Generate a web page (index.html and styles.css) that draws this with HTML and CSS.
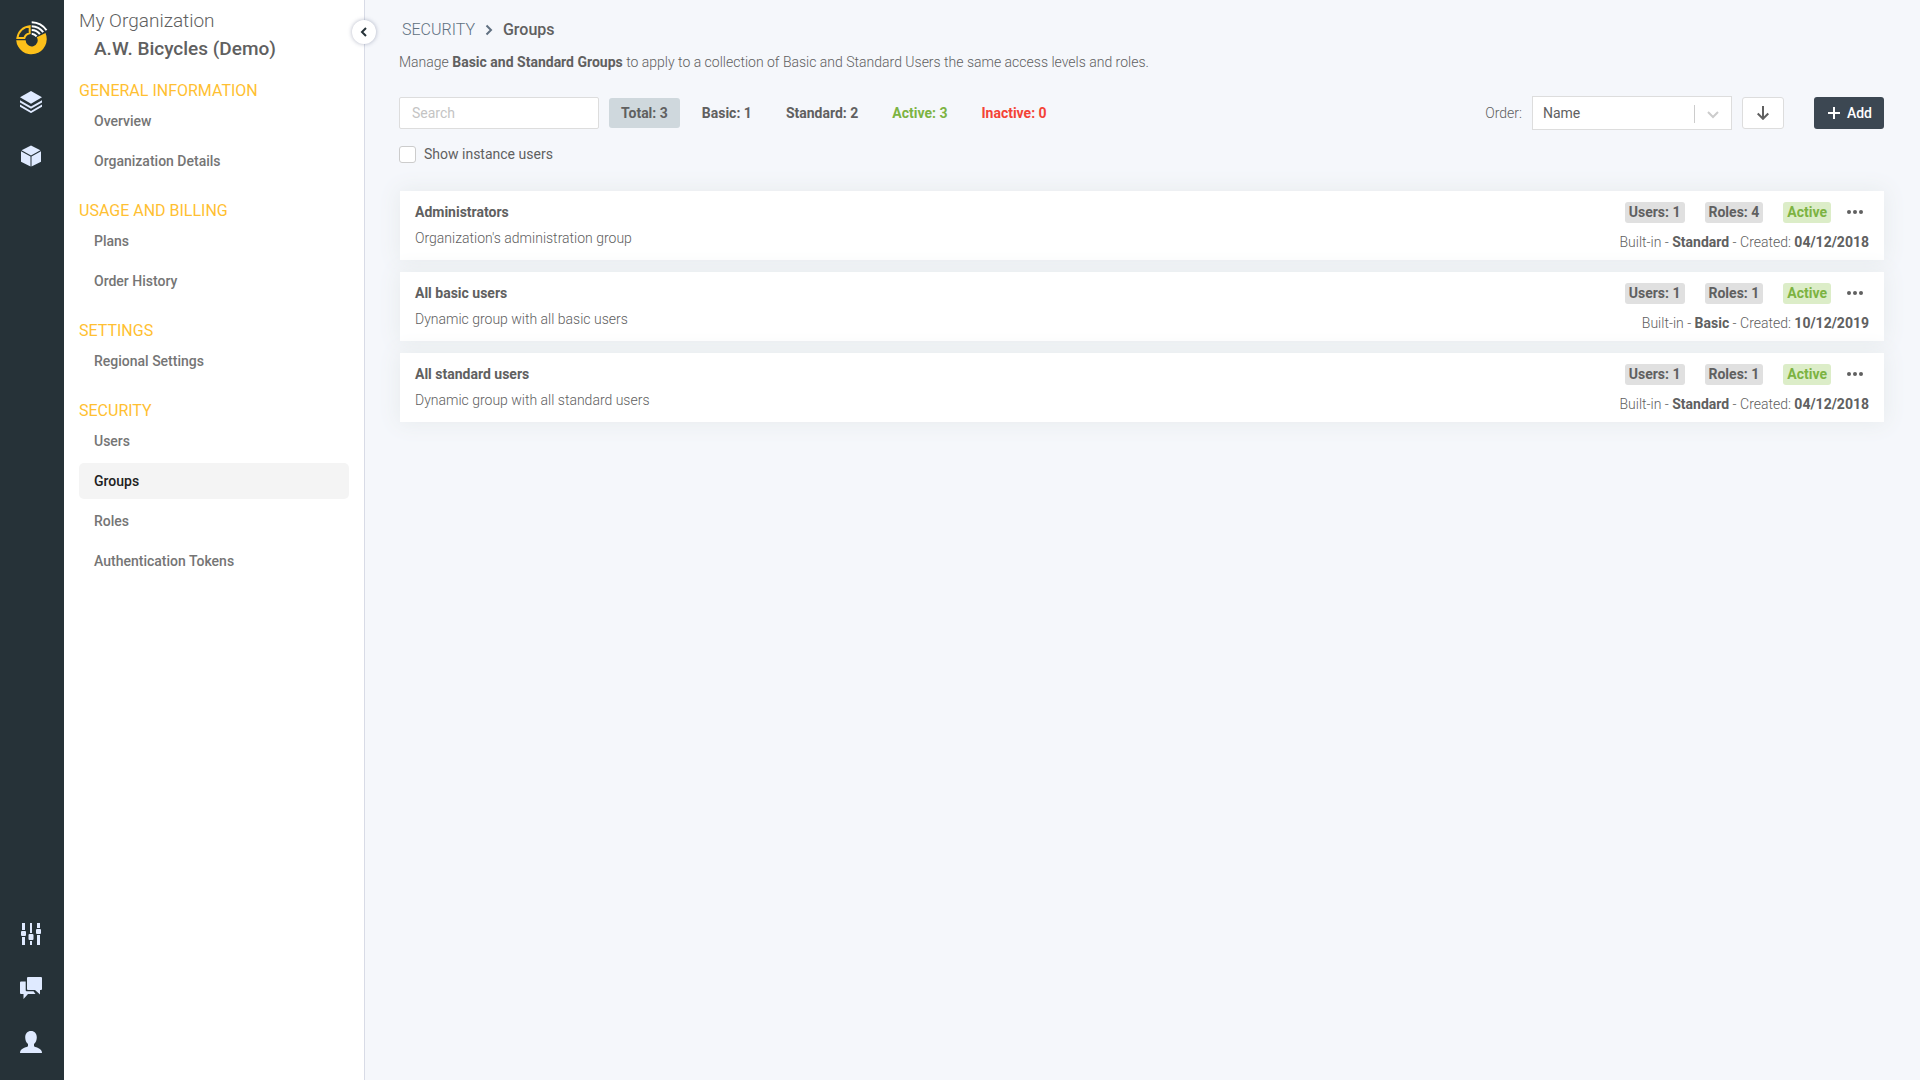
FILE: index.html
```html
<!DOCTYPE html>
<html lang="en">
<head>
    <meta charset="UTF-8">
    <title>Groups</title>
    <link rel="stylesheet" href="styles.css">
</head>
<body>
    <nav class="rail" aria-label="Main">
        <a href="#" class="logo" aria-label="Home">
            <svg width="32" height="35" viewBox="0 0 32 35">
                <path d="M.2 19.2H9.700A6 6 0 1 0 20.800 16.200L29.500 11.900A15.300 15.300 0 1 1 .2 19.200Z" fill="#fdc01a"/>
                <path d="M1.400 16.900A13.500 13.500 0 0 1 13.700 5.200V12.200A7 7 0 0 0 8.400 16.900Z" fill="none" stroke="#fdc01a" stroke-width="2"/>
                <g fill="none" stroke="#fff" stroke-width="2">
                    <path d="M15.700 1.200A18.500 18.500 0 0 1 30.500 9.300"/>
                    <path d="M15.700 5.200A14.500 14.500 0 0 1 27.200 11.200"/>
                    <path d="M15.700 9A10.500 10.500 0 0 1 23.900 13.200"/>
                    <path d="M15.700 12.700A7 7 0 0 1 20.600 15.300"/>
                </g>
            </svg>
        </a>
        <a href="#" class="rail-link" aria-label="Layers">
            <svg width="22" height="22" viewBox="0 0 22 22">
                <path d="M11 0 22 6.200 11 12.800 0 6.200Z"/>
                <path d="M0 9.200 11 15.600 22 9.200V11.400L11 17.800 0 11.400Z"/>
                <path d="M0 13.500 11 19.900 22 13.500V15.700L11 22.100 0 15.700Z"/>
            </svg>
        </a>
        <a href="#" class="rail-link" aria-label="Products">
            <svg width="20" height="22" viewBox="0 0 20 22">
                <path d="M10 .5 19.400 5.200 10 10.400.6 5.200Z"/>
                <path d="M0 6.200 9.500 11.400V21.500L0 16.800Z"/>
                <path d="M20 6.200 10.500 11.400V21.500L20 16.800Z"/>
            </svg>
        </a>
        <span class="rail-space"></span>
        <a href="#" class="rail-link" aria-label="Preferences">
            <svg width="22" height="22" viewBox="0 0 22 22">
                <path d="M2 0h3v7H2zM2 14h3v8H2zM10 0h2v10h-2zM10 18h2v4h-2zM17 0h3v5h-3zM17 12h3v10h-3z"/>
                <rect x="1" y="8" width="5" height="5" rx="1"/>
                <rect x="8.500" y="11" width="5" height="6" rx="1"/>
                <rect x="16" y="6" width="5" height="5" rx="1"/>
            </svg>
        </a>
        <a href="#" class="rail-link" aria-label="Messages">
            <svg width="22" height="22" viewBox="0 0 22 22">
                <path d="M0 5.500Q0 4.500 1 4.500H5.700V13.200Q5.700 14.200 6.700 14.200H13.500L15.500 17H8L3.500 22V17H1Q0 17 0 16Z"/>
                <path d="M7 1Q7 0 8 0H21Q22 0 22 1V12Q22 13 21 13H20V17.500L15 13H8Q7 13 7 12Z"/>
            </svg>
        </a>
        <a href="#" class="rail-link" aria-label="Account">
            <svg width="22" height="22" viewBox="0 0 22 22">
                <path d="M11 0C7.500 0 5.200 2.600 5.200 6.500C5.200 9 6.200 11.600 8 13V15.200C7.600 16 1.200 16.800 .2 20.500L0 22H22L21.800 20.500C20.800 16.800 14.400 16 14 15.200V13C15.800 11.600 16.800 9 16.800 6.500C16.800 2.600 14.500 0 11 0Z"/>
            </svg>
        </a>
    </nav>

    <aside class="sidebar">
        <button class="collapse" aria-label="Collapse menu">
            <svg width="8" height="10" viewBox="0 0 8 10"><path d="M6 1 2 5 6 9"/></svg>
        </button>
        <div class="org-label">My Organization</div>
        <div class="org-name">A.W. Bicycles (Demo)</div>

        <h2>GENERAL INFORMATION</h2>
        <ul>
            <li><a href="#">Overview</a></li>
            <li><a href="#">Organization Details</a></li>
        </ul>
        <h2>USAGE AND BILLING</h2>
        <ul>
            <li><a href="#">Plans</a></li>
            <li><a href="#">Order History</a></li>
        </ul>
        <h2>SETTINGS</h2>
        <ul>
            <li><a href="#">Regional Settings</a></li>
        </ul>
        <h2>SECURITY</h2>
        <ul>
            <li><a href="#">Users</a></li>
            <li><a href="#" class="current">Groups</a></li>
            <li><a href="#">Roles</a></li>
            <li><a href="#">Authentication Tokens</a></li>
        </ul>
    </aside>

    <main class="content">
        <div class="breadcrumb">
            <a href="#">SECURITY</a>
            <svg width="8" height="12" viewBox="0 0 8 12"><path d="M1.500 1.500 6 6 1.500 10.500"/></svg>
            <h1>Groups</h1>
        </div>
        <p class="intro">Manage <b>Basic and Standard Groups</b> to apply to a collection of Basic and Standard Users the same access levels and roles.</p>

        <div class="toolbar">
            <input type="text" class="search" placeholder="Search" aria-label="Search">
            <div class="filters">
                <button class="filter selected">Total: 3</button>
                <button class="filter">Basic: 1</button>
                <button class="filter">Standard: 2</button>
                <button class="filter green">Active: 3</button>
                <button class="filter red">Inactive: 0</button>
            </div>
            <label class="order-label" for="order">Order:</label>
            <div class="order">
                <select id="order">
                    <option>Name</option>
                </select>
                <svg width="26" height="18" viewBox="0 0 26 18"><path d="M.5 0V18" stroke-width="1"/><path d="M14 7 19 12 24 7" stroke-width="2"/></svg>
            </div>
            <button class="sort" aria-label="Sort direction">
                <svg width="12" height="14" viewBox="0 0 12 14"><path d="M6 0V13M.7 7.500 6 12.800 11.300 7.500"/></svg>
            </button>
            <button class="add">
                <svg width="12" height="12" viewBox="0 0 12 12"><path d="M6 0V12M0 6H12"/></svg>
                Add
            </button>
        </div>

        <label class="check"><input type="checkbox"> Show instance users</label>

        <div class="list">
            <div class="card">
                <div class="info">
                    <h3>Administrators</h3>
                    <p>Organization's administration group</p>
                </div>
                <div class="details">
                    <div class="badges">
                        <span class="badge">Users: 1</span>
                        <span class="badge">Roles: 4</span>
                        <span class="badge active">Active</span>
                        <button class="more" aria-label="More actions"><svg width="16" height="4" viewBox="0 0 16 4"><circle cx="2" cy="2" r="2"/><circle cx="8" cy="2" r="2"/><circle cx="14" cy="2" r="2"/></svg></button>
                    </div>
                    <p>Built-in - <b>Standard</b> - Created: <b>04/12/2018</b></p>
                </div>
            </div>
            <div class="card">
                <div class="info">
                    <h3>All basic users</h3>
                    <p>Dynamic group with all basic users</p>
                </div>
                <div class="details">
                    <div class="badges">
                        <span class="badge">Users: 1</span>
                        <span class="badge">Roles: 1</span>
                        <span class="badge active">Active</span>
                        <button class="more" aria-label="More actions"><svg width="16" height="4" viewBox="0 0 16 4"><circle cx="2" cy="2" r="2"/><circle cx="8" cy="2" r="2"/><circle cx="14" cy="2" r="2"/></svg></button>
                    </div>
                    <p>Built-in - <b>Basic</b> - Created: <b>10/12/2019</b></p>
                </div>
            </div>
            <div class="card">
                <div class="info">
                    <h3>All standard users</h3>
                    <p>Dynamic group with all standard users</p>
                </div>
                <div class="details">
                    <div class="badges">
                        <span class="badge">Users: 1</span>
                        <span class="badge">Roles: 1</span>
                        <span class="badge active">Active</span>
                        <button class="more" aria-label="More actions"><svg width="16" height="4" viewBox="0 0 16 4"><circle cx="2" cy="2" r="2"/><circle cx="8" cy="2" r="2"/><circle cx="14" cy="2" r="2"/></svg></button>
                    </div>
                    <p>Built-in - <b>Standard</b> - Created: <b>04/12/2018</b></p>
                </div>
            </div>
        </div>
    </main>
</body>
</html>
```
FILE: styles.css
```css
* {box-sizing: border-box;}
body {margin: 0; min-height: 100vh; display: flex; background: #f5f7fb; color: #606060; font: 14px/20px Roboto, sans-serif;}
h1, h2, h3, p, ul {margin: 0; padding: 0;}
p {font-weight: 300;}
ul {list-style: none;}
a {color: inherit; text-decoration: none;}
button, input, select {font: inherit; color: inherit;}
button {padding: 0; border: 0; background: none; cursor: pointer;}
svg {display: block; flex: none;}
b {font-weight: 700;}

.rail {width: 64px; flex: none; display: flex; flex-direction: column; padding: 0 2px 11px 0; background: #263238;}
.logo {height: 75px; display: flex; justify-content: center; align-items: center; padding: 2px 0 0 1px;}
.rail-link {height: 54px; display: flex; justify-content: center; align-items: center;}
.rail-link svg {fill: #dfeaff;}
.rail-space {flex: 1;}

.sidebar {position: relative; width: 301px; flex: none; padding: 7px 15px; background: #fff; border-right: 1px solid #d8dbe6;}
.collapse {position: absolute; top: 20px; right: -12px; width: 24px; height: 24px; display: flex; justify-content: center; align-items: center; border-radius: 50%; background: #fff; box-shadow: 0 0 4px rgba(60, 70, 110, .4);}
.collapse svg {fill: none; stroke: #263238; stroke-width: 2;}
.org-label {font-size: 19px; line-height: 28px; font-weight: 300;}
.org-name {padding-left: 15px; font-size: 19px; line-height: 28px; font-weight: 500;}
.sidebar h2 {margin-top: 16px; font-size: 16px; line-height: 24px; font-weight: 400; color: #ffbf32;}
.sidebar ul + h2 {margin-top: 20px;}
.sidebar li + li {margin-top: 4px;}
.sidebar li a {display: block; padding: 8px 15px; border-radius: 5px; font-weight: 500; color: #757575;}
.sidebar li .current {background: #f4f4f4; color: #212121;}

.content {flex: 1; min-width: 0; padding: 18px 36px 17px 34px;}
.breadcrumb {display: flex; align-items: center; gap: 10px; padding-left: 3px; font-size: 16px; line-height: 24px; color: #607080;}
.breadcrumb a {font-weight: 300;}
.breadcrumb svg {fill: none; stroke: #607080; stroke-width: 2;}
.breadcrumb h1 {font-size: 16px; font-weight: 500; color: #606060;}
.intro {margin-top: 10px;}

.toolbar {display: flex; align-items: center; margin-top: 24px;}
.search {width: 200px; height: 32px; padding: 0 12px; border: 1px solid #ddd; border-radius: 2px; background: #fff;}
.search::placeholder {color: #c4c4c4;}
.filters {display: flex; gap: 10px; margin-left: 10px;}
.filter {height: 30px; padding: 0 12px; border-radius: 3px; font-weight: 700;}
.filter.selected {background: #cfd8dd;}
.filter.green {color: #7cb342;}
.filter.red {color: #f44336;}
.order-label {margin: 0 10px 0 auto; font-weight: 300;}
.order {position: relative;}
.order select {display: block; width: 200px; height: 34px; padding: 0 10px; border: 1px solid #ddd; border-radius: 0; background: #fff; appearance: none;}
.order svg {position: absolute; top: 9px; right: 12px; fill: none; stroke: #ccc; pointer-events: none;}
.sort {width: 42px; height: 32px; display: flex; justify-content: center; align-items: center; margin-left: 10px; border: 1px solid #ddd; border-radius: 3px; background: #fff;}
.sort svg {fill: none; stroke: #606060; stroke-width: 2;}
.add {height: 32px; display: flex; align-items: center; gap: 7px; margin-left: 30px; padding: 0 12px 0 14px; border-radius: 3px; background: #3c4752; color: #fff; font-weight: 500;}
.add svg {fill: none; stroke: #fff; stroke-width: 2;}

.check {display: inline-flex; align-items: center; gap: 8px; margin-top: 14px;}
.check input {width: 17px; height: 17px; margin: 0; border: 1px solid #ccc; border-radius: 3px; background: #fff; appearance: none;}
.check input:checked {background: #3c4752;}

.list {display: grid; gap: 12px; margin: 23px 0 0 1px;}
.card {display: flex; justify-content: space-between; padding: 11px 15px 8px; background: #fff; box-shadow: 0 0 20px 2px #e8ecee;}
.info h3 {font-size: 14px; line-height: 20px; font-weight: 700;}
.info p {margin-top: 6px;}
.badges {display: flex; justify-content: flex-end; align-items: center; gap: 20px;}
.badge {padding: 0 4px; border-radius: 3px; background: #e0e0e0; line-height: 21px; font-weight: 700;}
.badge.active {background: #dcedc8; color: #7cb342;}
.more {height: 21px; margin-left: -4px; padding-right: 6px;}
.more svg {fill: #606060;}
.details p {margin-top: 9px; text-align: right;}
```
